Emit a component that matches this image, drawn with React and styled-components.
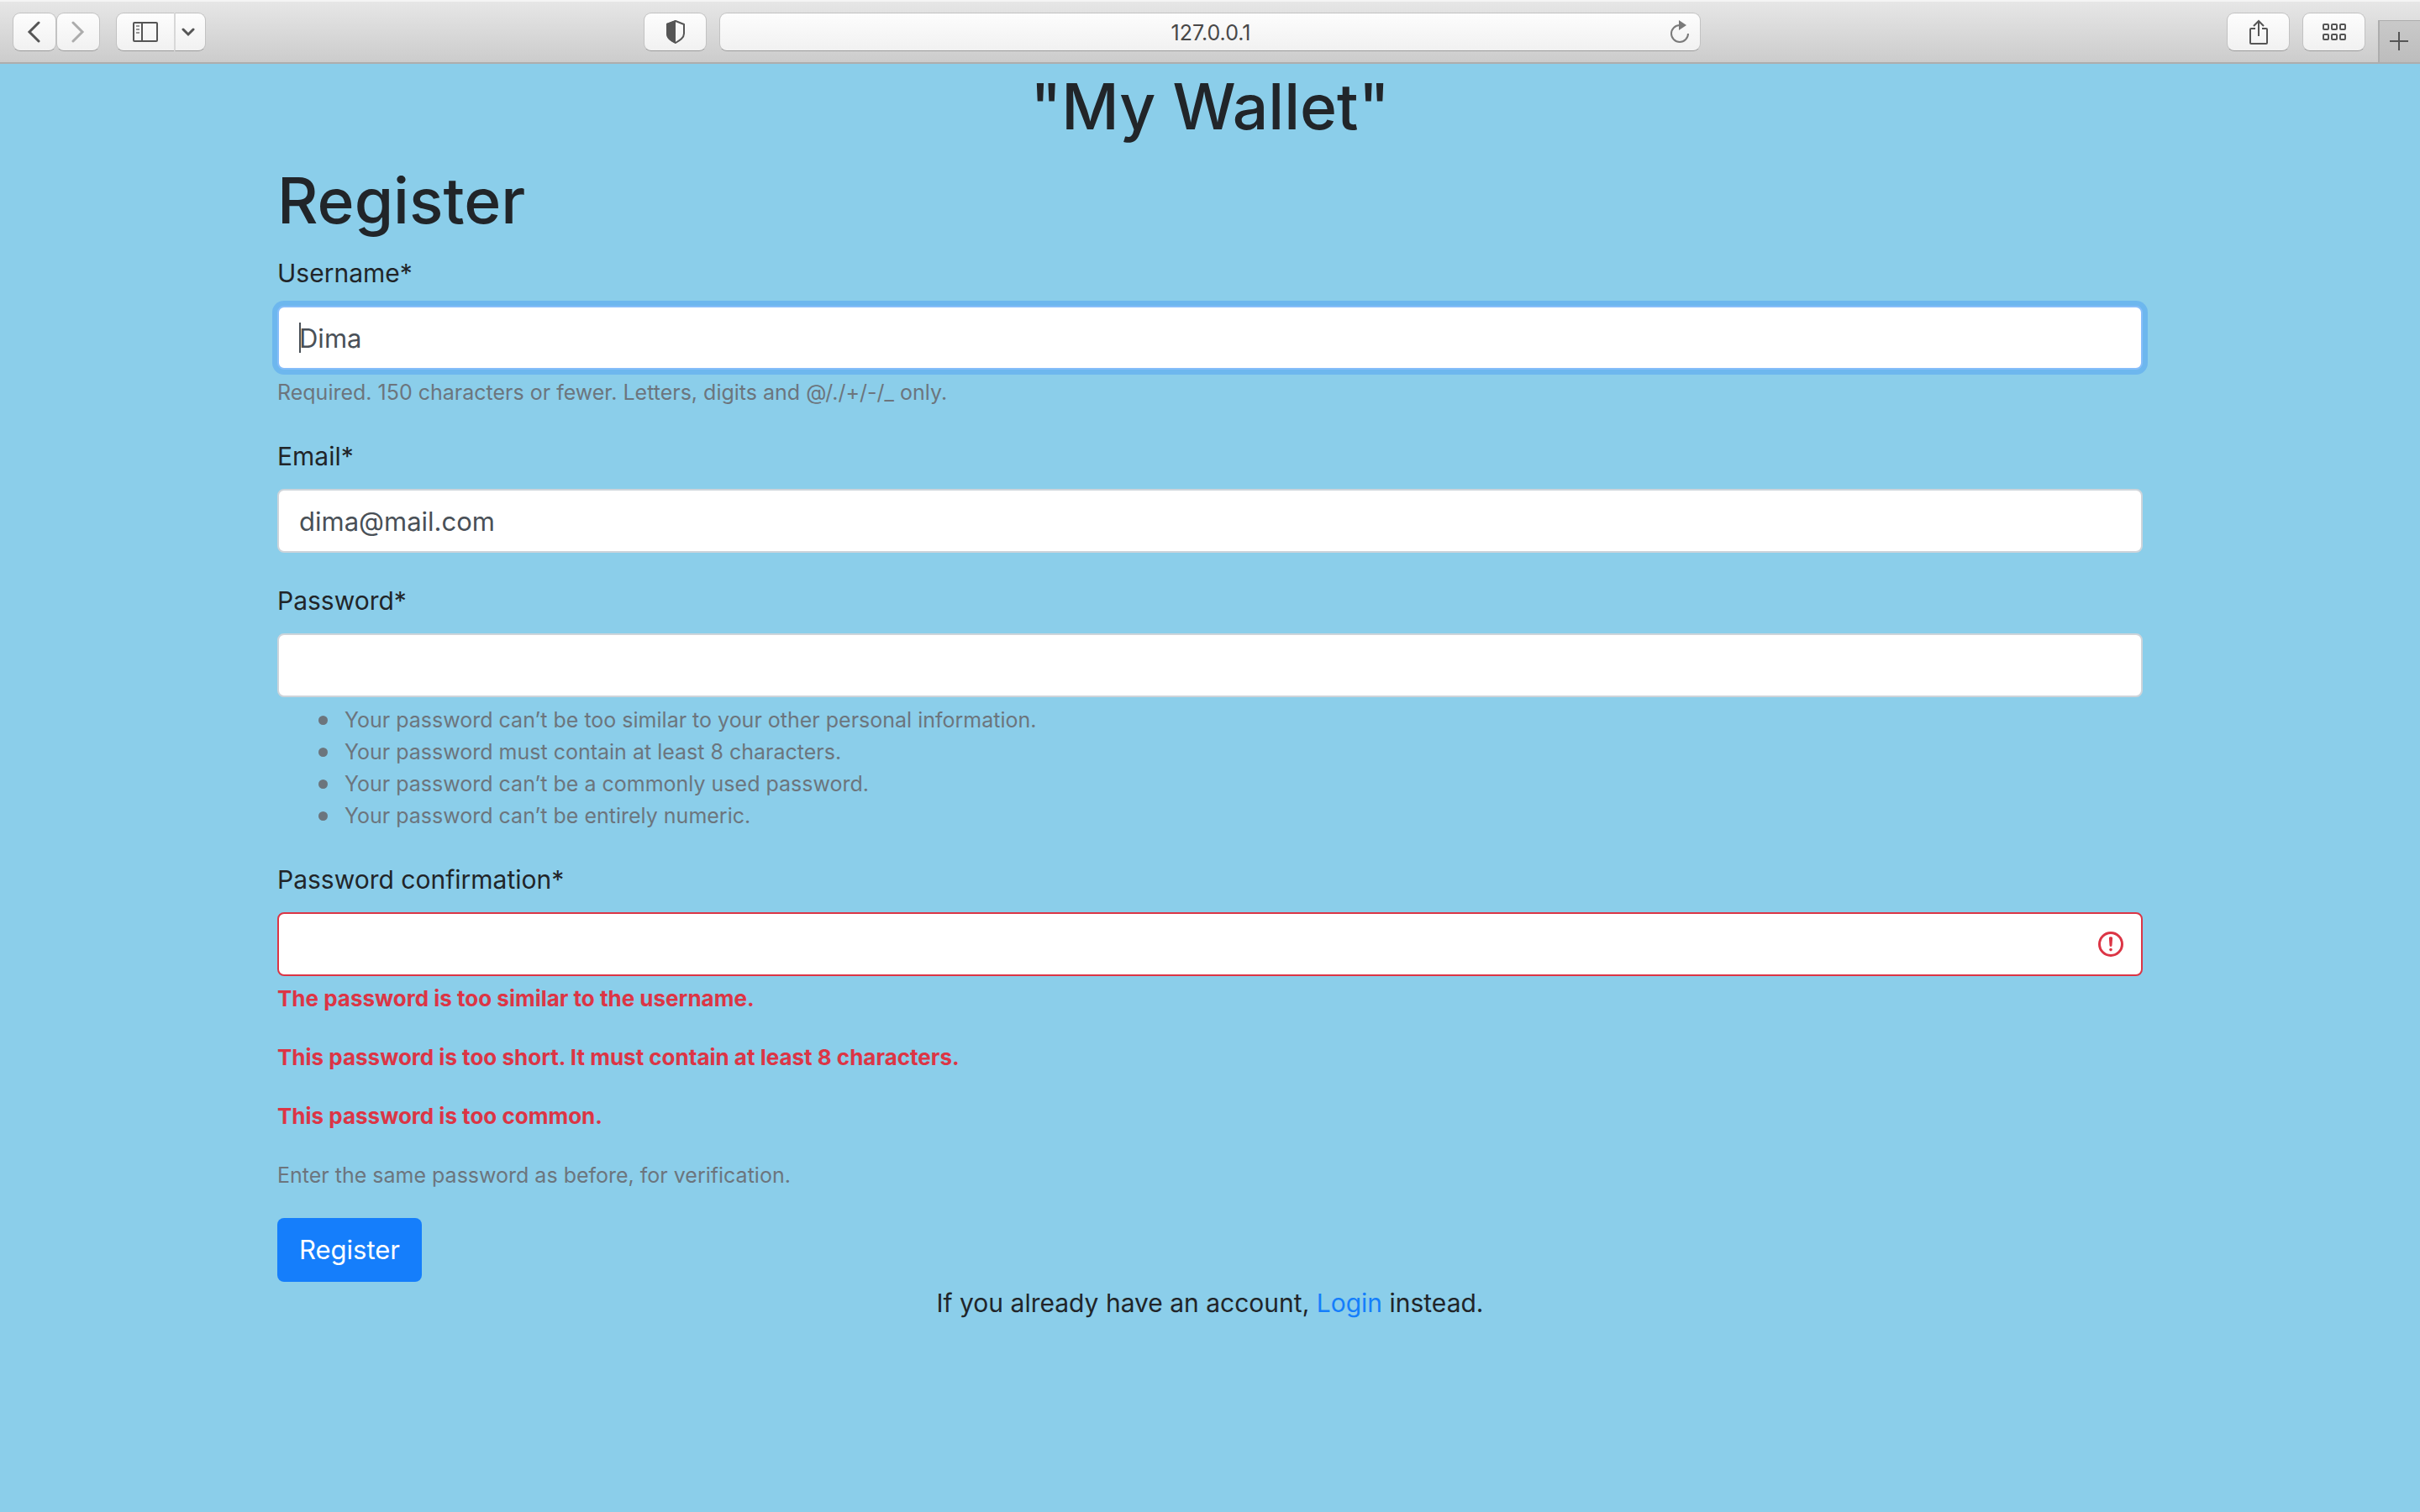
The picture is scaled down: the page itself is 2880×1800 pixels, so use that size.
import React from "react";
import styled, { createGlobalStyle, css } from "styled-components";

const GlobalStyle = createGlobalStyle`
  *, *::before, *::after { box-sizing: border-box; }
  body {
    margin: 0;
    background: #8bceea;
    color: #212529;
    font-family: Inter, "Liberation Sans", sans-serif;
    font-size: 30px;
    line-height: 48px;
  }
  button, input { font: inherit; }
`;

/* ---------- browser bar ---------- */

const Toolbar = styled.header`
  display: grid;
  grid-template-columns: 1fr minmax(0, 1168px) 1fr;
  height: 76px;
  padding-top: 15px;
  background: linear-gradient(#e7e7e7, #cccccc);
  border-bottom: 2px solid #adadad;
  box-shadow: inset 0 2px 0 #f4f4f4;
`;

const ToolGroup = styled.div`
  display: flex;
  align-items: flex-start;
  gap: ${({ $gap }) => $gap}px;
`;

const LeftTools = styled.div`
  display: flex;
  justify-content: space-between;
  padding: 0 15px;
`;

const RightTools = styled.div`
  display: flex;
  justify-content: flex-end;
  gap: 15px;
`;

const surface = css`
  height: 46px;
  border: 1px solid #c2c2c2;
  border-bottom-color: #9b9b9b;
  border-radius: 9px;
  background: linear-gradient(#fdfdfd, #f1f1f1);
  color: #555555;
`;

const ToolButton = styled.button`
  ${surface}
  display: flex;
  align-items: center;
  justify-content: center;
  width: ${({ $width }) => $width}px;
  padding: 0;
  ${({ $join }) => $join === "left" && "border-radius: 9px 0 0 9px; border-right: 0;"}
  ${({ $join }) =>
    $join === "right" &&
    "border-radius: 0 9px 9px 0; border-left: 2px solid #d8d8d8; padding-right: 6px;"}
  &:disabled { color: #acacac; }
`;

const AddressBar = styled.div`
  ${surface}
  display: grid;
  grid-template-columns: 36px 1fr 36px;
  align-items: center;
`;

const AddressInput = styled.input`
  grid-column: 2;
  min-width: 0;
  width: 100%;
  padding: 2px 0 0 2px;
  border: 0;
  outline: 0;
  background: transparent;
  color: #484848;
  font-size: 25px;
  line-height: 32px;
  text-align: center;
`;

const ReloadButton = styled.button`
  display: flex;
  padding: 0;
  border: 0;
  background: transparent;
  color: #7a7a7a;
`;

const NewTabButton = styled.button`
  display: flex;
  align-items: center;
  justify-content: center;
  align-self: flex-end;
  width: 50px;
  height: 50px;
  padding: 0 2px 2px 0;
  border: 0;
  border-top: 1px solid #adadad;
  border-left: 2px solid #adadad;
  background: linear-gradient(#c9c9c9, #bdbdbd);
  color: #555555;
`;

const Icon = ({ w, h, children }) => (
  <svg
    width={w}
    height={h}
    viewBox={`0 0 ${w} ${h}`}
    fill="none"
    stroke="currentColor"
    strokeWidth="2"
    aria-hidden="true"
  >
    {children}
  </svg>
);

function BrowserBar() {
  return (
    <Toolbar>
      <LeftTools>
        <ToolGroup $gap={19}>
          <ToolGroup $gap={0}>
            <ToolButton $width={52} aria-label="Back">
              <Icon w={18} h={26}>
                <path d="M14 2L3 13l11 11" strokeWidth="3" strokeLinecap="round" />
              </Icon>
            </ToolButton>
            <ToolButton $width={52} aria-label="Forward" disabled>
              <Icon w={16} h={26}>
                <path d="M2 2l11 11L2 24" strokeWidth="3" strokeLinecap="round" />
              </Icon>
            </ToolButton>
          </ToolGroup>
          <ToolGroup $gap={0}>
            <ToolButton $width={69} $join="left" aria-label="Show sidebar">
              <Icon w={30} h={24}>
                <rect x="1" y="1" width="28" height="22" rx="1" />
                <path d="M11 1v22" />
                <path d="M4 5h4M4 9h4M4 13h4" opacity="0.6" />
              </Icon>
            </ToolButton>
            <ToolButton $width={38} $join="right" aria-label="Tab groups">
              <Icon w={16} h={12}>
                <path d="M2 3l6 6 6-6" strokeWidth="3" strokeLinecap="round" />
              </Icon>
            </ToolButton>
          </ToolGroup>
        </ToolGroup>
        <ToolButton $width={75} aria-label="Privacy report">
          <Icon w={24} h={30}>
            <path d="M12 2l10 4v11c0 5-5 8-10 11C7 25 2 22 2 17V6z" strokeLinejoin="round" />
            <path d="M12 1L1 5v12c0 6 5 9 11 12z" fill="currentColor" stroke="none" />
          </Icon>
        </ToolButton>
      </LeftTools>
      <AddressBar>
        <AddressInput aria-label="Address" defaultValue="127.0.0.1" />
        <ReloadButton aria-label="Reload">
          <Icon w={24} h={28}>
            <path d="M12 6a10 10 0 1 0 10 10" />
            <path d="M11 0v12l9-6z" fill="currentColor" stroke="none" />
          </Icon>
        </ReloadButton>
      </AddressBar>
      <RightTools>
        <ToolButton $width={75} aria-label="Share">
          <Icon w={24} h={32}>
            <path d="M8 12H3a1 1 0 0 0-1 1v16a1 1 0 0 0 1 1h18a1 1 0 0 0 1-1V13a1 1 0 0 0-1-1h-5" />
            <path d="M12 21V3M6 9l6-6 6 6" />
          </Icon>
        </ToolButton>
        <ToolButton $width={75} aria-label="Tab overview">
          <Icon w={28} h={20}>
            {[1, 11, 21].map((x) =>
              [1, 13].map((y) => <rect key={`${x}-${y}`} x={x} y={y} width="6" height="6" rx="1" />)
            )}
          </Icon>
        </ToolButton>
        <NewTabButton aria-label="New tab">
          <Icon w={22} h={22}>
            <path d="M11 0v22M0 11h22" />
          </Icon>
        </NewTabButton>
      </RightTools>
    </Toolbar>
  );
}

/* ---------- page ---------- */

const Container = styled.main`
  max-width: 2280px;
  margin: 0 auto;
  padding: 0 30px;
`;

const Heading = styled.h1`
  margin: 0;
  padding: 3px 0 13px;
  font-size: 75px;
  font-weight: 500;
  line-height: 96px;
  text-align: ${({ $center }) => ($center ? "center" : "left")};
`;

const Field = styled.div`
  margin-bottom: 32px;
`;

const Label = styled.label`
  display: block;
  padding: 1px 0 15px;
`;

const InputWrap = styled.div`
  position: relative;
`;

const borders = { focused: "#86bdf9", invalid: "#dc3545", normal: "#ced4da" };

const TextInput = styled.input`
  display: block;
  width: 100%;
  height: 76px;
  padding: 12px 24px;
  border: 2px solid ${({ $state }) => borders[$state || "normal"]};
  border-radius: 8px;
  outline: 0;
  background: #ffffff;
  color: #495057;
  font-size: 31px;
  ${({ $state }) => $state === "focused" && "box-shadow: 0 0 0 6px #6db7ee;"}
`;

const Caret = styled.span`
  position: absolute;
  top: 20px;
  left: 26px;
  width: 2px;
  height: 36px;
  background: #495057;
`;

const AlertIcon = styled.svg`
  position: absolute;
  top: 20px;
  right: 20px;
  width: 36px;
  height: 36px;
`;

const helpText = css`
  font-size: 25px;
  line-height: 38px;
  color: #6c757d;
`;

const Help = styled.p`
  ${helpText}
  margin: 8px 0 0;
`;

const Rules = styled.ul`
  ${helpText}
  margin: 8px 0 0;
  padding-left: 49px;
  list-style: none;
`;

const Rule = styled.li`
  display: flex;
  align-items: center;
  gap: 20px;
  &::before {
    content: "";
    width: 11px;
    height: 11px;
    border-radius: 50%;
    background: currentColor;
  }
`;

const ErrorText = styled.p`
  margin: 8px 0 32px;
  color: #dc3545;
  font-size: 26px;
  font-weight: 700;
  line-height: 38px;
  & + & { margin-top: 0; }
`;

const SubmitButton = styled.button`
  display: block;
  height: 76px;
  padding: 0 26px;
  border: 0;
  border-radius: 8px;
  background: #157efb;
  color: #ffffff;
  font-size: 31px;
`;

const LoginLine = styled.p`
  margin: 0;
  padding-top: 1px;
  text-align: center;
`;

const Link = styled.a`
  color: #157efb;
  text-decoration: none;
`;

const rules = [
  "Your password can’t be too similar to your other personal information.",
  "Your password must contain at least 8 characters.",
  "Your password can’t be a commonly used password.",
  "Your password can’t be entirely numeric.",
];

const errors = [
  "The password is too similar to the username.",
  "This password is too short. It must contain at least 8 characters.",
  "This password is too common.",
];

export default function App() {
  return (
    <>
      <GlobalStyle />
      <BrowserBar />
      <Container>
        <Heading $center>"My Wallet"</Heading>
        <Heading>Register</Heading>
        <form onSubmit={(e) => e.preventDefault()}>
          <Field>
            <Label htmlFor="username">Username*</Label>
            <InputWrap>
              <TextInput id="username" type="text" defaultValue="Dima" $state="focused" />
              <Caret />
            </InputWrap>
            <Help>Required. 150 characters or fewer. Letters, digits and @/./+/-/_ only.</Help>
          </Field>
          <Field>
            <Label htmlFor="email">Email*</Label>
            <TextInput id="email" type="email" defaultValue="dima@mail.com" />
          </Field>
          <Field>
            <Label htmlFor="password1">Password*</Label>
            <TextInput id="password1" type="password" />
            <Rules>
              {rules.map((rule) => (
                <Rule key={rule}>{rule}</Rule>
              ))}
            </Rules>
          </Field>
          <Field>
            <Label htmlFor="password2">Password confirmation*</Label>
            <InputWrap>
              <TextInput id="password2" type="password" $state="invalid" aria-invalid="true" />
              <AlertIcon viewBox="0 0 12 12" fill="none" stroke="#dc3545" aria-hidden="true">
                <circle cx="6" cy="6" r="4.5" />
                <path d="M5.8 3.6h.4L6 6.5z" strokeLinejoin="round" />
                <circle cx="6" cy="8.2" r="0.6" fill="#dc3545" stroke="none" />
              </AlertIcon>
            </InputWrap>
            {errors.map((error) => (
              <ErrorText key={error}>{error}</ErrorText>
            ))}
            <Help>Enter the same password as before, for verification.</Help>
          </Field>
          <SubmitButton type="submit">Register</SubmitButton>
        </form>
        <LoginLine>
          If you already have an account, <Link href="#login">Login</Link> instead.
        </LoginLine>
      </Container>
    </>
  );
}
